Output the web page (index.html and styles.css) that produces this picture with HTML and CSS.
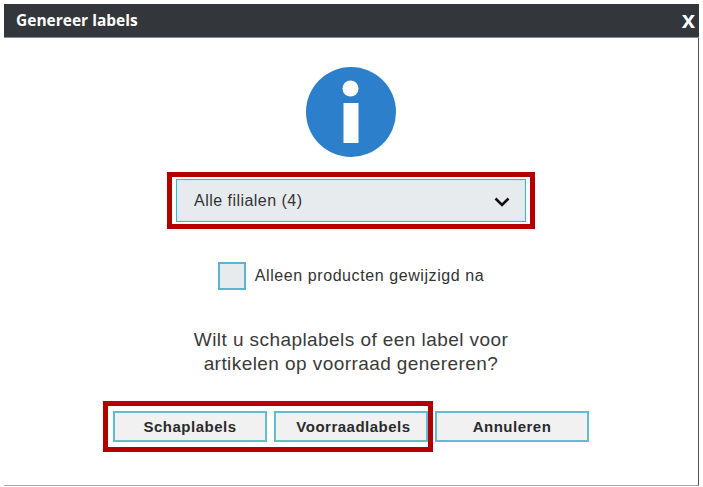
FILE: index.html
```html
<!DOCTYPE html>
<html lang="nl">
<head>
<meta charset="utf-8">
<title>Genereer labels</title>
<link rel="stylesheet" href="styles.css">
</head>
<body>
<div class="dialog">
  <header class="titlebar">
    <span class="title">Genereer labels</span>
    <span class="close">x</span>
  </header>
  <main class="content">
    <svg class="info" width="90" height="90" viewBox="0 0 90 90" aria-hidden="true">
      <circle cx="45" cy="45" r="45" fill="#2b7fcb"/>
      <circle cx="44.500" cy="21.500" r="8" fill="#fff"/>
      <rect x="37.500" y="36" width="15" height="40" fill="#fff"/>
    </svg>
    <div class="select-frame">
      <div class="select">
        <span>Alle filialen (4)</span>
        <svg class="chevron" width="16" height="10" viewBox="0 0 16 10" aria-hidden="true">
          <path d="M1.500 1.500 8 8l6.500-6.500" fill="none" stroke="#111" stroke-width="2.600"/>
        </svg>
      </div>
    </div>
    <label class="check-row">
      <span class="checkbox"></span>
      <span>Alleen producten gewijzigd na</span>
    </label>
    <p class="question">Wilt u schaplabels of een label voor<br>artikelen op voorraad genereren?</p>
    <div class="actions">
      <button class="btn">Schaplabels</button>
      <button class="btn btn-offset">Voorraadlabels</button>
      <button class="btn">Annuleren</button>
      <span class="highlight"></span>
    </div>
  </main>
</div>
</body>
</html>
```

FILE: styles.css
```css
* { box-sizing: border-box; }
html, body { margin: 0; padding: 0; background: #fff; }
body { padding: 4px 4px 0 4px; font-family: "Liberation Sans", Arial, sans-serif; color: #333; }
.dialog {
  width: 695px;
  height: 482px;
  border-right: 1px solid #555;
  border-bottom: 1px solid #a9a9a9;
  display: flex;
  flex-direction: column;
}
.titlebar {
  height: 34px;
  flex: none;
  margin-right: -1px;
  background: #33363a;
  border-bottom: 1px solid #7f8f99;
  display: flex;
  align-items: center;
  justify-content: space-between;
  padding: 0 4px 0 12px;
  color: #fff;
  font-weight: 700;
}
.title { font-family: "Open Sans", sans-serif; font-size: 15.500px; margin-top: -2px; }
.close { font-family: "Liberation Sans", sans-serif; font-size: 24px; line-height: 20px; margin-top: -2px; }
.content {
  flex: 1;
  display: flex;
  flex-direction: column;
  align-items: center;
  padding-top: 29px;
}
.info { display: block; flex: none; }
.select-frame {
  margin-top: 15px;
  width: 368px;
  height: 57px;
  border: 5px solid #b50000;
  padding: 2px 4px;
}
.select {
  height: 43px;
  background: #e8ebee;
  border: 1px solid #4fb0c8;
  box-shadow: inset 0 0 0 1px #c8eef5;
  display: flex;
  align-items: center;
  justify-content: space-between;
  padding: 0 15px 0 17px;
  font-size: 16px;
  letter-spacing: 0.470px;
}
.chevron { margin-top: 2px; }
.check-row {
  margin-top: 33px;
  display: flex;
  align-items: center;
  gap: 9px;
  font-size: 16px;
  letter-spacing: 0.580px;
}
.checkbox {
  width: 28px;
  height: 28px;
  background: #e8ebee;
  border: 2px solid #5bb5cc;
}
.question {
  margin: 38px 0 0;
  font-size: 19px;
  line-height: 24px;
  letter-spacing: 0.430px;
  text-align: center;
  color: #3a3a3a;
}
.actions {
  position: relative;
  margin-top: 35px;
  display: flex;
  gap: 7px;
}
.btn {
  width: 154px;
  height: 31px;
  padding: 0;
  background: #f1f1f2;
  border: 2px solid #62bdd3;
  border-radius: 0;
  font-family: "Liberation Sans", sans-serif;
  font-weight: 700;
  font-size: 15px;
  letter-spacing: 0.500px;
  color: #2b2b2b;
}
.btn-offset { padding-left: 5px; }
.highlight {
  position: absolute;
  left: -10px;
  top: -10px;
  width: 330px;
  height: 51px;
  border: 5px solid #b50000;
  pointer-events: none;
}
```
